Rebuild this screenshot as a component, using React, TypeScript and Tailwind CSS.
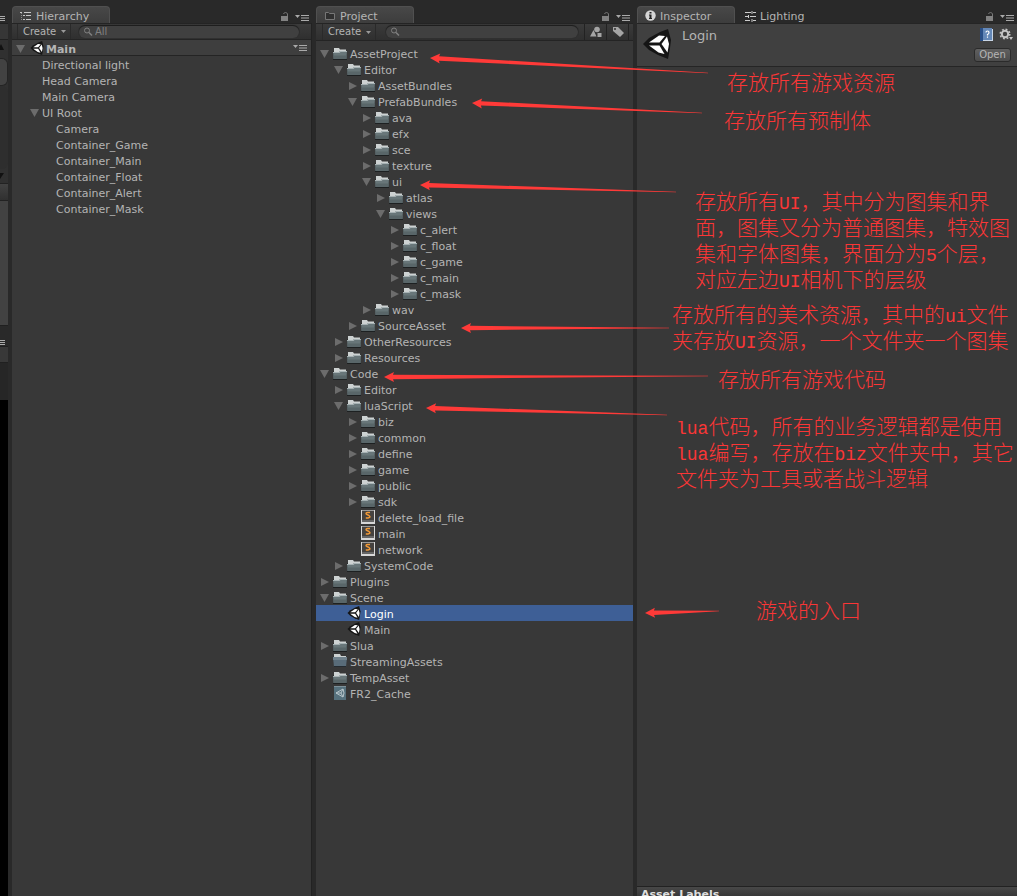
import React from "react";

type IconKind = "folder" | "closed" | "lua" | "unity" | "asset";

type Node = {
  name: string;
  depth: number;
  state?: "open" | "shut";
  icon?: IconKind;
  selected?: boolean;
};

const hierarchy: Node[] = [
  { name: "Directional light", depth: 1 },
  { name: "Head Camera", depth: 1 },
  { name: "Main Camera", depth: 1 },
  { name: "UI Root", depth: 1, state: "open" },
  { name: "Camera", depth: 2 },
  { name: "Container_Game", depth: 2 },
  { name: "Container_Main", depth: 2 },
  { name: "Container_Float", depth: 2 },
  { name: "Container_Alert", depth: 2 },
  { name: "Container_Mask", depth: 2 },
];

const dir = (name: string, depth: number, state: "open" | "shut" = "shut"): Node => ({
  name,
  depth,
  state,
  icon: "folder",
});

const project: Node[] = [
  dir("AssetProject", 0, "open"),
  dir("Editor", 1, "open"),
  dir("AssetBundles", 2),
  dir("PrefabBundles", 2, "open"),
  dir("ava", 3),
  dir("efx", 3),
  dir("sce", 3),
  dir("texture", 3),
  dir("ui", 3, "open"),
  dir("atlas", 4),
  dir("views", 4, "open"),
  dir("c_alert", 5),
  dir("c_float", 5),
  dir("c_game", 5),
  dir("c_main", 5),
  dir("c_mask", 5),
  dir("wav", 3),
  dir("SourceAsset", 2),
  dir("OtherResources", 1),
  dir("Resources", 1),
  dir("Code", 0, "open"),
  dir("Editor", 1),
  dir("luaScript", 1, "open"),
  dir("biz", 2),
  dir("common", 2),
  dir("define", 2),
  dir("game", 2),
  dir("public", 2),
  dir("sdk", 2),
  { name: "delete_load_file", depth: 2, icon: "lua" },
  { name: "main", depth: 2, icon: "lua" },
  { name: "network", depth: 2, icon: "lua" },
  dir("SystemCode", 1),
  dir("Plugins", 0),
  dir("Scene", 0, "open"),
  { name: "Login", depth: 1, icon: "unity", selected: true },
  { name: "Main", depth: 1, icon: "unity" },
  dir("Slua", 0),
  { name: "StreamingAssets", depth: 0, icon: "closed" },
  dir("TempAsset", 0),
  { name: "FR2_Cache", depth: 0, icon: "asset" },
];

function UnityMark({ className }: { className: string }) {
  return (
    <svg viewBox="0 0 28 30" className={className} aria-hidden="true">
      <path d="M0 15 6 9 17 3 25 0 28 11 27 19 25 30 15 26 6 21Z" fill="#151515" />
      <path d="M6 13.500 16 6.500 22 7 16.500 13.500Z" fill="#fff" />
      <path d="M6 16.500H16.500L21.500 25 15.500 23.500Z" fill="#fff" />
      <path d="M18.500 15 24 7.500 26 15 24.500 23.500Z" fill="#fff" />
    </svg>
  );
}

function FolderIcon() {
  return (
    <svg viewBox="0 -1.5 14 14" className="size-3.5" aria-hidden="true">
      <path d="M0 4h14v8.500H0z" fill="#1d2021" />
      <path d="M1 .5h5l1 1.500h6v4H1z" fill="#cdd2d2" />
      <path d="M0 4.500h6l1-1h7l-.5 8h-13z" fill="#687679" />
      <path d="M0 4.500h6l1-1h7v1H7.500l-1 1H0z" fill="#a7b2b4" />
      <path d="M.3 8h13.400l-.2 3.500h-13z" fill="#596669" />
    </svg>
  );
}

function ClosedFolderIcon() {
  return (
    <svg viewBox="0 0 14 14" className="size-3.5" aria-hidden="true">
      <path d="M1 0h6l1 2h5v4H1z" fill="#cdd2d2" />
      <path d="M0 3h14l-1 10H1z" fill="#596c79" />
      <path d="M0 3h14v3H0z" fill="#70828d" />
      <path d="M1 12h12v1H1z" fill="#252c31" />
    </svg>
  );
}

function LuaIcon() {
  return (
    <svg viewBox="0 0 14 14" className="size-3.5" aria-hidden="true">
      <path d="M0 0h14v14H0z" fill="#d7d7d7" />
      <path d="M1 0h12v10H1z" fill="#45423f" />
      <path d="M1 0h12v1H1z" fill="#999" />
      <path d="M1 10h12v2H1z" fill="#666" />
      <path d="M9 2.500H6.500Q5 2.500 5 3.500T6.500 4.800 8.800 6.300 7 8H4.800" fill="none" stroke="#f29a38" strokeWidth="1.400" />
    </svg>
  );
}

function AssetIcon() {
  return (
    <svg viewBox="0 0 14 14" className="size-3.5" aria-hidden="true">
      <path d="M1 0h12v14H1z" fill="#56717d" />
      <path d="M1 0h12v1H1z" fill="#7c919a" />
      <path d="m3 7 7-4 1 4-1 4zM3 7h5l2-4M8 7l2 4" fill="none" stroke="#b8c6cb" />
    </svg>
  );
}

function NodeIcon({ kind }: { kind: IconKind }) {
  if (kind === "folder") return <FolderIcon />;
  if (kind === "closed") return <ClosedFolderIcon />;
  if (kind === "lua") return <LuaIcon />;
  if (kind === "asset") return <AssetIcon />;
  return <UnityMark className="size-3.5" />;
}

function Triangle({ state }: { state?: "open" | "shut" }) {
  return (
    <svg viewBox="0 0 10 10" className="mt-0.5 size-2.5 shrink-0" aria-hidden="true">
      {state === "open" && <path d="M0 1h9L4.500 9z" fill="#6c6c6c" />}
      {state === "shut" && <path d="M1 1v8l8-4z" fill="#6c6c6c" />}
    </svg>
  );
}

function Tree({ nodes, label }: { nodes: Node[]; label: string }) {
  return (
    <ul role="tree" aria-label={label}>
      {nodes.map((n, i) => (
        <li
          key={i}
          role="treeitem"
          aria-level={n.depth + 1}
          aria-selected={!!n.selected}
          aria-expanded={n.state ? n.state === "open" : undefined}
          className={
            n.selected
              ? "flex h-4 items-center bg-[#3e5f96] pl-1 text-white"
              : "flex h-4 items-center pl-1"
          }
        >
          <span className="flex items-center" style={{ paddingLeft: n.depth * 14 }}>
            <Triangle state={n.state} />
            {n.icon && (
              <span className="mx-[3px] shrink-0">
                <NodeIcon kind={n.icon} />
              </span>
            )}
            <span className={n.icon ? "pt-1 whitespace-nowrap" : "ml-0.5 pt-1 whitespace-nowrap"}>
              {n.name}
            </span>
          </span>
        </li>
      ))}
    </ul>
  );
}

function MenuGlyph() {
  return (
    <svg viewBox="0 0 14 8" className="h-2 w-3.5" aria-hidden="true">
      <path d="M0 1h5L2.500 4z" fill="#aaa" />
      <path d="M6 1.500h8M6 4h8M6 6.500h8" stroke="#aaa" />
    </svg>
  );
}

function PanelButtons() {
  return (
    <div className="ml-auto flex items-end gap-1.5 pb-px pr-[3px]">
      <button type="button" aria-label="Lock">
        <svg viewBox="0 0 8 10" className="block h-2.5 w-2" aria-hidden="true">
          <path d="M0 4h7v5H0z" fill="#828282" />
          <path d="M2.500 2Q3 .5 4.500.5T6.500 2v2" fill="none" stroke="#777" />
        </svg>
      </button>
      <button type="button" aria-label="Panel menu">
        <MenuGlyph />
      </button>
    </div>
  );
}

const tabClass =
  "flex h-[17px] w-[98px] items-center gap-1 rounded-t border border-b-0 border-[#505050] bg-linear-to-b from-[#484848] to-[#3d3d3d] pl-[7px] pt-1";

function HierarchyGlyph() {
  return (
    <svg viewBox="0 0 12 10" className="mb-0.5 h-2.5 w-3 shrink-0" aria-hidden="true">
      <path d="M0 1.500h2M4 1.500h7M3 4.500h2M6 4.500h5M3 8.500h2M6 8.500h5" stroke="#c8c8c8" />
      <path d="M1.500 2v7" stroke="#888" strokeDasharray="1 1" />
    </svg>
  );
}

function FolderGlyph() {
  return (
    <svg viewBox="0 0 12 10" className="mb-0.5 h-2.5 w-3 shrink-0" aria-hidden="true">
      <path d="M1.500 8.500v-7h3l1 1h5v6z" fill="#303030" stroke="#777" />
    </svg>
  );
}

function InfoGlyph() {
  return (
    <svg viewBox="0 0 11 11" className="mb-1 size-[11px] shrink-0" aria-hidden="true">
      <circle cx="5.500" cy="5.500" r="5.200" fill="#d6d6d6" />
      <path d="M4.500 2h2v1.500h-2zM4 4.500h2.500V8H7v1H4V8h.5V5.500H4z" fill="#222" />
    </svg>
  );
}

function SlidersGlyph() {
  return (
    <svg viewBox="0 0 11 11" className="size-[11px] shrink-0" aria-hidden="true">
      <path d="M0 1.500h6M8 1.500h3M0 5.500h3M5 5.500h6M0 9.500h5M8 9.500h3" stroke="#ccc" />
      <path d="M7 0v3M3.500 4v3M7 8v3" stroke="#ccc" />
    </svg>
  );
}

function Search({ label, placeholder }: { label: string; placeholder?: string }) {
  return (
    <div className="flex h-3 min-w-0 flex-1 items-center rounded-full bg-[#404040] pl-1 shadow-[0_-1px_1px_#1d1d1d,0_0_0_1px_#303030]">
      <svg viewBox="0 0 12 10" className="h-2.5 w-3 shrink-0" fill="none" stroke="#808080" aria-hidden="true">
        <circle cx="4" cy="3.500" r="2.500" />
        <path d="m6 5.500 3 3" strokeWidth="1.500" />
      </svg>
      <input
        type="text"
        aria-label={label}
        placeholder={placeholder}
        className="h-4 w-full min-w-0 bg-transparent text-[10px] leading-4 outline-none placeholder:text-[#808080]"
      />
    </div>
  );
}

function CreateButton() {
  return (
    <button
      type="button"
      className="flex h-full w-[54px] shrink-0 items-center justify-between border-x border-[#2a2a2a] pl-[5px] pr-1 text-[10px]"
    >
      Create
      <svg viewBox="0 0 5 3" className="h-[3px] w-[5px]" aria-hidden="true">
        <path d="M0 0h5L2.500 3z" fill="#999" />
      </svg>
    </button>
  );
}

const toolbarClass =
  "flex items-center border-y border-[#242424] bg-linear-to-b from-[#3b3b3b] to-[#2f2f2f]";

const arrows = [
  [430, 58, 708, 73],
  [472, 103, 702, 113],
  [420, 185, 676, 192],
  [461, 328, 669, 328],
  [384, 377, 708, 376],
  [426, 408, 667, 415],
  [645, 613, 719, 611],
];

function arrowPoints([x1, y1, x2, y2]: number[]) {
  const length = Math.hypot(x2 - x1, y2 - y1);
  const ux = (x2 - x1) / length;
  const uy = (y2 - y1) / length;
  const at = (along: number, side: number) =>
    `${x1 + ux * along - uy * side},${y1 + uy * along + ux * side}`;
  return [at(0, 0), at(10, -5), at(9, -2.2), at(length, -0.2), at(length, 0.2), at(9, 2.2), at(10, 5)].join(" ");
}

function Half({ children }: { children: React.ReactNode }) {
  return (
    <span className="font-['Liberation_Mono',monospace] text-[18px] leading-none">{children}</span>
  );
}

const noteClass = "absolute whitespace-nowrap";

function Annotations() {
  return (
    <div className="pointer-events-none absolute inset-0 overflow-hidden font-['Noto_Sans_CJK_SC',sans-serif] text-[21px] leading-[26px] font-light text-[#fb3636]">
      <svg className="absolute left-0 top-0 size-full" aria-hidden="true">
        {arrows.map((a, i) => (
          <polygon key={i} points={arrowPoints(a)} fill="#ff3a38" />
        ))}
      </svg>
      <p className={`${noteClass} left-[727px] top-[68px]`}>存放所有游戏资源</p>
      <p className={`${noteClass} left-[724px] top-[106px]`}>存放所有预制体</p>
      <p className={`${noteClass} left-[695px] top-[187px]`}>
        存放所有<Half>UI</Half>，其中分为图集和界
        <br />
        面，图集又分为普通图集，特效图
        <br />
        集和字体图集，界面分为<Half>5</Half>个层，
        <br />
        对应左边<Half>UI</Half>相机下的层级
      </p>
      <p className={`${noteClass} left-[672px] top-[300px]`}>
        存放所有的美术资源，其中的<Half>ui</Half>文件
        <br />
        夹存放<Half>UI</Half>资源，一个文件夹一个图集
      </p>
      <p className={`${noteClass} left-[718px] top-[365px]`}>存放所有游戏代码</p>
      <p className={`${noteClass} left-[676px] top-[412px]`}>
        <Half>lua</Half>代码，所有的业务逻辑都是使用
        <br />
        <Half>lua</Half>编写，存放在<Half>biz</Half>文件夹中，其它
        <br />
        文件夹为工具或者战斗逻辑
      </p>
      <p className={`${noteClass} left-[756px] top-[596px]`}>游戏的入口</p>
    </div>
  );
}

function EdgePanels() {
  return (
    <div className="flex flex-col overflow-hidden bg-[#292929]" aria-hidden="true">
      <div className="h-[23px] pt-4">
        <svg viewBox="0 0 6 6" className="size-1.5">
          <path d="M0 .5h5M0 2.500h5M0 4.500h5" stroke="#aaa" />
        </svg>
      </div>
      <div className="h-[17px] border-y border-[#202020] bg-[#363636]" />
      <div className="flex h-[143px] flex-col bg-[#303030]">
        <svg viewBox="0 0 4 6" className="mt-1 h-1.5 w-1">
          <path d="M0 6V2l1-2 3 6z" fill="#111" />
        </svg>
        <div className="mt-2 h-7 rounded-r-md border border-l-0 border-[#242424] bg-[#424242]" />
        <div className="grow rounded-r-md bg-[#2e2e2e]" />
        <svg viewBox="0 0 4 6" className="my-1 h-1.5 w-1">
          <path d="M0 0h4L0 6z" fill="#111" />
        </svg>
      </div>
      <div className="h-[18px] border-y border-[#222] bg-linear-to-b from-[#424242] to-[#303030]" />
      <div className="h-[125px] border-b border-[#202020] bg-[#424242]" />
      <div className="h-5 pt-3.5">
        <svg viewBox="0 0 6 6" className="size-1.5">
          <path d="M0 .5h5M0 2.500h5M0 4.500h5" stroke="#aaa" />
        </svg>
      </div>
      <div className="h-[17px] border-y border-[#202020] bg-[#383838]" />
      <div className="h-[37px] bg-[#262626]" />
      <div className="grow bg-black" />
    </div>
  );
}

export default function App() {
  return (
    <main className="relative grid min-h-screen grid-cols-[8px_minmax(0,300fr)_minmax(0,317fr)_minmax(0,380fr)] gap-x-1 bg-[#292929] font-['DejaVu_Sans',sans-serif] text-[11px] leading-4 text-[#b4b4b4]">
      <EdgePanels />

      <section className="flex flex-col pt-1.5" aria-label="Hierarchy">
        <div className="flex">
          <div className={tabClass}>
            <HierarchyGlyph />
            <h2>Hierarchy</h2>
          </div>
          <PanelButtons />
        </div>
        <div className="flex grow flex-col border-r border-[#222] bg-[#383838]">
          <div className={`${toolbarClass} h-[17px] gap-2 pl-[5px] pr-3`}>
            <CreateButton />
            <Search label="Search hierarchy" placeholder="All" />
          </div>
          <div className="flex h-4 items-center border-b border-[#242424] bg-[#3e3e3e] pl-1 pr-1">
            <Triangle state="open" />
            <UnityMark className="ml-1 size-3.5" />
            <h3 className="ml-0.5 pt-1 font-bold">Main</h3>
            <button type="button" aria-label="Scene menu" className="ml-auto">
              <MenuGlyph />
            </button>
          </div>
          <Tree nodes={hierarchy} label="Scene objects" />
        </div>
      </section>

      <section className="flex flex-col pt-1.5" aria-label="Project">
        <div className="flex">
          <div className={tabClass}>
            <FolderGlyph />
            <h2>Project</h2>
          </div>
          <PanelButtons />
        </div>
        <div className="flex grow flex-col bg-[#383838]">
          <div className={`${toolbarClass} h-[18px] pl-1.5`}>
            <CreateButton />
            <div className="flex min-w-0 flex-1 pl-2.5 pr-1.5">
              <Search label="Search project" />
            </div>
            <button type="button" aria-label="Filter by type" className="flex h-full w-[22px] items-center justify-center border-l border-[#222]">
              <svg viewBox="0 0 12 12" className="size-3" fill="#a5a5a5" aria-hidden="true">
                <circle cx="7" cy="3.500" r="2.800" />
                <path d="M0 10.500 3.500 4 6.500 10.500zM7.500 7h4v4h-4z" />
              </svg>
            </button>
            <button type="button" aria-label="Filter by label" className="flex h-full w-[23px] items-center justify-center border-x border-[#222]">
              <svg viewBox="0 0 12 12" className="size-3" aria-hidden="true">
                <path d="M1 1h5l6 6-4 4-7-6z" fill="#a5a5a5" />
                <circle cx="3" cy="3" r="1" fill="#333" />
              </svg>
            </button>
            <span className="w-1" />
          </div>
          <div className="pt-1">
            <Tree nodes={project} label="Project assets" />
          </div>
        </div>
      </section>

      <section className="flex flex-col pt-1.5" aria-label="Inspector">
        <div className="flex">
          <div className={tabClass}>
            <InfoGlyph />
            <h2>Inspector</h2>
          </div>
          <button type="button" className="ml-2.5 flex h-[17px] items-center gap-1 pt-1">
            <SlidersGlyph />
            Lighting
          </button>
          <PanelButtons />
        </div>
        <div className="flex grow flex-col bg-[#383838]">
          <header className="flex h-11 border-y border-[#252525] bg-[#404040] pl-1.5 pr-1">
            <UnityMark className="mt-[5px] h-[30px] w-7" />
            <h1 className="ml-[11px] mt-1 text-[13px]">Login</h1>
            <div className="ml-auto flex flex-col items-end justify-between pb-1 pt-1">
              <div className="flex gap-1.5">
                <button type="button" aria-label="Help">
                  <svg viewBox="0 0 13 14" className="h-3.5 w-[13px]" aria-hidden="true">
                    <path d="M1 1h12v12H1z" fill="#c9d6e6" />
                    <path d="M0 0h3v13H0z" fill="#294f87" />
                    <path d="M3 0h9v12H3z" fill="#6488b8" />
                    <path d="M6 4.500q0-1.500 1.500-1.500T9 4.500t-1.500 2v1M7.500 8.500v1.300" fill="none" stroke="#fff" strokeWidth="1.200" />
                  </svg>
                </button>
                <button type="button" aria-label="Settings">
                  <svg viewBox="0 0 14 14" className="size-3.5" aria-hidden="true">
                    <circle cx="6" cy="6" r="3.200" fill="none" stroke="#c4c4c4" strokeWidth="2" />
                    <circle cx="6" cy="6" r="4.800" fill="none" stroke="#c4c4c4" strokeWidth="1.500" strokeDasharray="1.900 1.870" />
                    <path d="M10 9h4l-2 3z" fill="#c4c4c4" />
                  </svg>
                </button>
              </div>
              <button
                type="button"
                className="mr-0.5 h-3.5 w-[37px] rounded-[3px] border border-[#2b2b2b] bg-linear-to-b from-[#606060] to-[#4c4c4c] text-[10px] leading-3"
              >
                Open
              </button>
            </div>
          </header>
          <div className="grow" />
          <footer className="h-2.5 overflow-hidden border-t border-[#222] bg-linear-to-b from-[#484848] to-[#383838] pl-1 font-bold text-[#dedede]">
            Asset Labels
          </footer>
        </div>
      </section>

      <Annotations />
    </main>
  );
}
